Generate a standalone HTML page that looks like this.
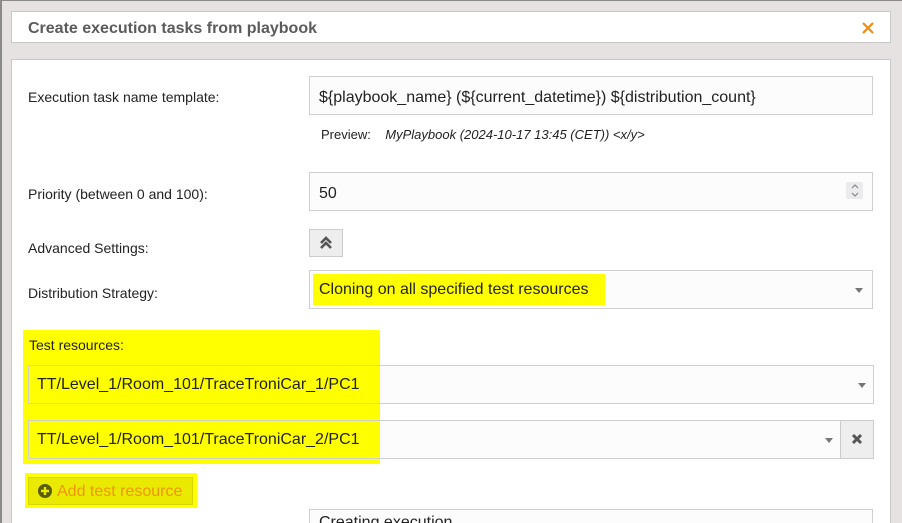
<!DOCTYPE html>
<html style="width:902px;height:523px;overflow:hidden"><head><meta charset="utf-8"><style>
*{box-sizing:border-box;margin:0;padding:0}
body{width:902px;height:523px;overflow:hidden;background:#e6e2e1;font-family:"Liberation Sans",Arial,sans-serif;position:relative;color:#222}
.abs{position:absolute}
.hdr{left:11px;top:11px;width:880px;height:32px;background:#fff;border:1px solid #c8c8c8}
.hdr h1{position:absolute;left:16px;top:8px;font-size:16px;font-weight:bold;color:#5b5b5b}
.panel{left:11px;top:59px;width:880px;height:470px;background:#fff;border:1px solid #c8c8c8}
.lbl{font-size:14px;color:#222}
.inp{background:#fcfcfc;border:1px solid #cfcfcf;font-size:16px;color:#222;padding-left:9px;padding-top:3px;line-height:36px}
.arrow{position:absolute;width:0;height:0;border-left:4px solid transparent;border-right:4px solid transparent;border-top:5px solid #777}
</style></head><body>
<div class="abs" style="left:0;top:0;width:2px;height:523px;background:#8a8a8a"></div>
<div class="abs" style="left:0;top:0;width:902px;height:1px;background:#8a8a8a"></div>
<div class="abs hdr"><h1>Create execution tasks from playbook</h1>
<svg class="abs" style="left:850px;top:10px" width="12" height="12" viewBox="0 0 12 12"><path d="M1 1L11 11M11 1L1 11" stroke="#f08a10" stroke-width="2.2"/></svg></div>
<div class="abs panel"></div>
<div class="abs lbl" style="left:28px;top:89px">Execution task name template:</div>
<div class="abs inp" style="left:309px;top:76px;width:564px;height:39px">${playbook_name} (${current_datetime}) ${distribution_count}</div>
<div class="abs" style="left:321px;top:127px;font-size:13px">Preview:&nbsp;&nbsp;&nbsp;&nbsp;<i>MyPlaybook (2024-10-17 13:45 (CET)) &lt;x/y&gt;</i></div>
<div class="abs lbl" style="left:28px;top:186px">Priority (between 0 and 100):</div>
<div class="abs inp" style="left:309px;top:172px;width:564px;height:39px">50</div>
<div class="abs" style="left:846px;top:182px;width:17px;height:17px;background:#ebebee;border-radius:2px"></div>
<svg class="abs" style="left:850px;top:183px" width="10" height="15" viewBox="0 0 10 15"><path d="M2 5L5 2L8 5M2 10L5 13L8 10" fill="none" stroke="#888" stroke-width="1.2"/></svg>
<div class="abs lbl" style="left:28px;top:240px">Advanced Settings:</div>
<div class="abs" style="left:309px;top:229px;width:34px;height:28px;background:#eee;border:1px solid #ccc"></div>
<svg class="abs" style="left:319px;top:236px" width="14" height="14" viewBox="0 0 14 14"><path d="M2 7L7 2L12 7M2 12L7 7L12 12" fill="none" stroke="#555" stroke-width="2.6"/></svg>
<div class="abs lbl" style="left:28px;top:285px">Distribution Strategy:</div>
<div class="abs inp" style="left:309px;top:270px;width:564px;height:39px"></div>
<div class="abs" style="left:313px;top:274px;width:292px;height:31px;background:#ffff00;font-size:16px;line-height:31px;padding-left:6px">Cloning on all specified test resources</div>
<div class="arrow" style="left:855px;top:288px"></div>
<div class="abs" style="left:23px;top:330px;width:357px;height:134px;background:#ffff00"></div>
<div class="abs lbl" style="left:29px;top:337px">Test resources:</div>
<div class="abs inp" style="left:28px;top:365px;width:846px;height:39px;background:transparent"></div>
<div class="abs" style="left:380px;top:366px;width:493px;height:37px;background:#fcfcfc"></div>
<div class="abs" style="left:37px;top:376px;font-size:16px">TT/Level_1/Room_101/TraceTroniCar_1/PC1</div>
<div class="arrow" style="left:858px;top:383px"></div>
<div class="abs inp" style="left:28px;top:420px;width:813px;height:39px;background:transparent"></div>
<div class="abs" style="left:380px;top:421px;width:460px;height:37px;background:#fcfcfc"></div>
<div class="abs" style="left:37px;top:431px;font-size:16px">TT/Level_1/Room_101/TraceTroniCar_2/PC1</div>
<div class="arrow" style="left:825px;top:438px"></div>
<div class="abs" style="left:840px;top:420px;width:34px;height:39px;background:#eee;border:1px solid #ccc"></div>
<svg class="abs" style="left:851px;top:433px" width="12" height="12" viewBox="0 0 12 12"><path d="M2 2L10 10M10 2L2 10" stroke="#555" stroke-width="3"/></svg>
<div class="abs" style="left:25px;top:473px;width:172px;height:35px;background:#ffff00"></div>
<div class="abs" style="left:28px;top:477px;width:165px;height:28px;background:#eaea00;border:1px solid #d6d600"></div>
<svg class="abs" style="left:38px;top:484px" width="14" height="14" viewBox="0 0 14 14"><circle cx="7" cy="7" r="7" fill="#5a5a00"/><path d="M7 3V11M3 7H11" stroke="#eaea00" stroke-width="2.4"/></svg>
<div class="abs" style="left:57px;top:483px;font-size:16px;color:#f0940a">Add test resource</div>
<div class="abs inp" style="left:309px;top:509px;width:564px;height:14px;border-bottom:none;overflow:hidden;line-height:16px;padding-top:5px">Creating execution</div>
</body></html>
